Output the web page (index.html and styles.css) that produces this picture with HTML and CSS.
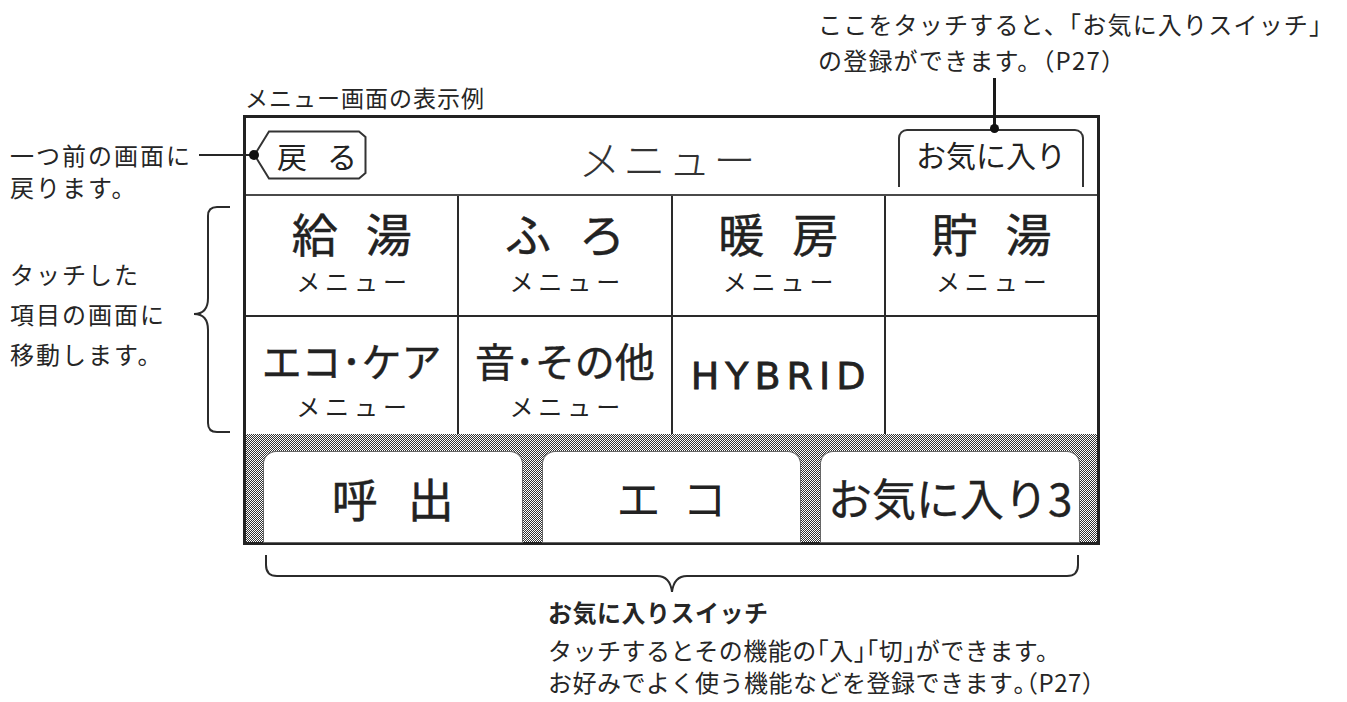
FILE: index.html
```html
<!DOCTYPE html>
<html lang="ja">
<head>
<meta charset="utf-8">
<title>メニュー画面の表示例</title>
<link rel="stylesheet" href="styles.css">
</head>
<body>
<div class="page">
  <div class="top-note">
    <p>ここをタッチすると、「お気に入りスイッチ」</p>
    <p>の登録ができます。（P27）</p>
  </div>
  <div class="caption">メニュー画面の表示例</div>
  <div class="main">
    <div class="side">
      <p class="note-back">一つ前の画面に<br>戻ります。</p>
      <div class="note-move">
        <p>タッチした<br>項目の画面に<br>移動します。</p>
        <svg class="brace-left" width="40" height="227" viewBox="0 0 40 227">
          <path d="M38,1 H25 Q16,1 16,10 V92 Q16,108 2,108 Q16,108 16,124 V217 Q16,226 25,226 H38" fill="none" stroke="#2b2b2b" stroke-width="2"/>
        </svg>
      </div>
    </div>
    <div class="screen">
      <div class="head">
        <div class="back">
          <svg class="back-shape" width="114" height="50" viewBox="0 0 114 50">
            <path d="M16,1.5 H106 L112.5,7 V43 L106,48.5 H16 L1.5,25 Z" fill="#fff" stroke="#333" stroke-width="2"/>
          </svg>
          <span class="back-label">戻る</span>
        </div>
        <div class="title">メニュー</div>
        <div class="fav-tab">お気に入り</div>
      </div>
      <div class="grid">
        <div class="cell cell-top"><span class="big">給湯</span><span class="small">メニュー</span></div>
        <div class="cell cell-top"><span class="big">ふろ</span><span class="small">メニュー</span></div>
        <div class="cell cell-top"><span class="big">暖房</span><span class="small">メニュー</span></div>
        <div class="cell cell-top"><span class="big">貯湯</span><span class="small">メニュー</span></div>
        <div class="cell cell-bottom"><span class="mid">エコ･ケア</span><span class="small">メニュー</span></div>
        <div class="cell cell-bottom"><span class="mid">音･その他</span><span class="small">メニュー</span></div>
        <div class="cell cell-center"><span class="latin">HYBRID</span></div>
        <div class="cell"></div>
      </div>
      <div class="switches">
        <div class="sw"><span class="sw-wide">呼出</span></div>
        <div class="sw"><span class="sw-mid">エコ</span></div>
        <div class="sw"><span class="sw-tight">お気に入り3</span></div>
      </div>
    </div>
  </div>
  <div class="bottom">
    <svg class="brace-bottom" width="816" height="40" viewBox="0 0 816 40">
      <path d="M2,0 V10 Q2,21 13,21 H393 Q406,21 408,37 Q410,21 423,21 H803 Q814,21 814,10 V0" fill="none" stroke="#2b2b2b" stroke-width="2"/>
    </svg>
    <div class="bottom-note">
      <p class="bold">お気に入りスイッチ</p>
      <p>タッチするとその機能の<span class="h">「</span>入<span class="h">」「</span>切<span class="h">」</span>ができます。</p>
      <p>お好みでよく使う機能などを登録できます<span class="h">。（</span>P27）</p>
    </div>
  </div>
</div>
</body>
</html>
```

FILE: styles.css
```css
* { box-sizing: border-box; }
html, body { margin: 0; padding: 0; background: #fff; }
p { margin: 0; }

.page {
  position: relative;
  width: 1347px;
  height: 702px;
  overflow: hidden;
  font-family: "Noto Sans CJK JP", "Noto Sans", sans-serif;
  color: #262626;
}

/* annotations */
.top-note {
  margin-left: 818px;
  padding-top: 6px;
  font-size: 24px;
  line-height: 36px;
  letter-spacing: 1.2px;
  white-space: nowrap;
}
.caption {
  margin-left: 245px;
  margin-top: 7px;
  font-size: 23px;
  line-height: 24px;
  letter-spacing: 1px;
  white-space: nowrap;
}
.main {
  display: flex;
  margin-top: 6px;
}
.side {
  width: 243px;
  padding-left: 10px;
  display: flex;
  flex-direction: column;
  font-size: 24px;
  letter-spacing: 2px;
  white-space: nowrap;
}
.note-back {
  margin-top: 24px;
  line-height: 32px;
}
.note-move {
  margin-top: 3px;
  height: 227px;
  display: flex;
  align-items: center;
}
.note-move p {
  line-height: 40px;
  margin-bottom: 11px;
}
.brace-left {
  margin-left: auto;
  margin-right: 11px;
  flex: none;
}
.h { font-feature-settings: "halt" 1; }

/* device screen */
.screen {
  width: 857px;
  height: 430px;
  border: 3px solid #222;
  display: flex;
  flex-direction: column;
  color: #222;
}
.head {
  height: 78px;
  border-bottom: 2px solid #4a4a4a;
  display: grid;
  grid-template-columns: 1fr auto 1fr;
  align-items: start;
  padding: 0 13px 0 7px;
}
.back {
  position: relative;
  width: 114px;
  height: 50px;
  margin-top: 12px;
  display: flex;
  align-items: center;
  padding-left: 24px;
  white-space: nowrap;
}
.back-shape { position: absolute; left: 0; top: 0; }
.back-label {
  position: relative;
  font-size: 30px;
  line-height: 30px;
  letter-spacing: 20px;
}
.back::before {
  content: "";
  position: absolute;
  right: 100%;
  top: 24px;
  width: 54px;
  height: 2px;
  background: #262626;
}
.back::after {
  content: "";
  position: absolute;
  left: -4px;
  top: 20px;
  width: 10px;
  height: 10px;
  border-radius: 50%;
  background: #111;
}
.title {
  margin-top: 19px;
  font-size: 42px;
  line-height: 42px;
  font-weight: 300;
  letter-spacing: 3px;
  color: #333;
  white-space: nowrap;
}
.fav-tab {
  position: relative;
  justify-self: end;
  margin-top: 11px;
  width: 186px;
  height: 58px;
  border: 2px solid #333;
  border-bottom: none;
  border-radius: 9px 9px 0 0;
  padding-top: 8px;
  text-align: center;
  font-size: 30px;
  line-height: 30px;
  white-space: nowrap;
}
.fav-tab::before {
  content: "";
  position: absolute;
  left: 93px;
  top: -53px;
  width: 3px;
  height: 52px;
  background: #1a1a1a;
}
.fav-tab::after {
  content: "";
  position: absolute;
  left: 90px;
  top: -7px;
  width: 9px;
  height: 9px;
  border-radius: 50%;
  background: #111;
}

.grid {
  display: grid;
  grid-template-columns: repeat(4, 1fr);
  grid-template-rows: 119px 117px;
  gap: 2px;
  background: #2a2a2a;
}
.cell {
  background: #fff;
  display: flex;
  flex-direction: column;
  align-items: center;
  white-space: nowrap;
}
.cell-top { padding-top: 13px; }
.cell-bottom { padding-top: 23px; }
.cell-center { justify-content: center; }
.big {
  font-size: 46px;
  line-height: 46px;
  letter-spacing: 28px;
  margin-left: 28px;
  -webkit-text-stroke: 0.5px #222;
}
.mid {
  font-size: 40px;
  line-height: 40px;
  -webkit-text-stroke: 0.4px #222;
}
.small {
  font-size: 24px;
  line-height: 24px;
  letter-spacing: 5px;
  margin-left: 5px;
  margin-top: 14px;
}
.cell-bottom .small { margin-top: 14px; }
.latin {
  font-family: "DejaVu Sans", sans-serif;
  font-size: 38px;
  line-height: 40px;
  letter-spacing: 6px;
  margin-left: 6px;
  -webkit-text-stroke: 0.8px #222;
}

.switches {
  flex: 1;
  display: grid;
  grid-template-columns: repeat(3, 1fr);
  gap: 21px;
  padding: 18px 18px 0;
  background-color: #9a9a9a;
  background-image: repeating-conic-gradient(#333 0% 25%, #ffffff 0% 50%);
  background-size: 2px 2px;
}
.sw {
  background: #fff;
  border-radius: 12px 12px 0 0;
  display: flex;
  align-items: center;
  justify-content: center;
  box-shadow: 0 0 0 1px #666;
  white-space: nowrap;
}
.sw-wide {
  font-size: 46px;
  line-height: 46px;
  letter-spacing: 30px;
  margin-left: 30px;
  -webkit-text-stroke: 0.5px #222;
}
.sw-mid {
  font-size: 44px;
  line-height: 46px;
  letter-spacing: 22px;
  margin-left: 22px;
}
.sw-tight {
  font-size: 44px;
  line-height: 46px;
  -webkit-text-stroke: 0.3px #222;
}

/* bottom annotation */
.bottom {
  display: flex;
  flex-direction: column;
}
.brace-bottom {
  margin-left: 264px;
  margin-top: 10px;
}
.bottom-note {
  margin-left: 548px;
  margin-top: 1px;
  font-size: 24px;
  line-height: 32px;
  letter-spacing: 0.5px;
  white-space: nowrap;
}
.bottom-note .bold {
  font-weight: 700;
  letter-spacing: 0.5px;
  margin-bottom: 6px;
}
```
